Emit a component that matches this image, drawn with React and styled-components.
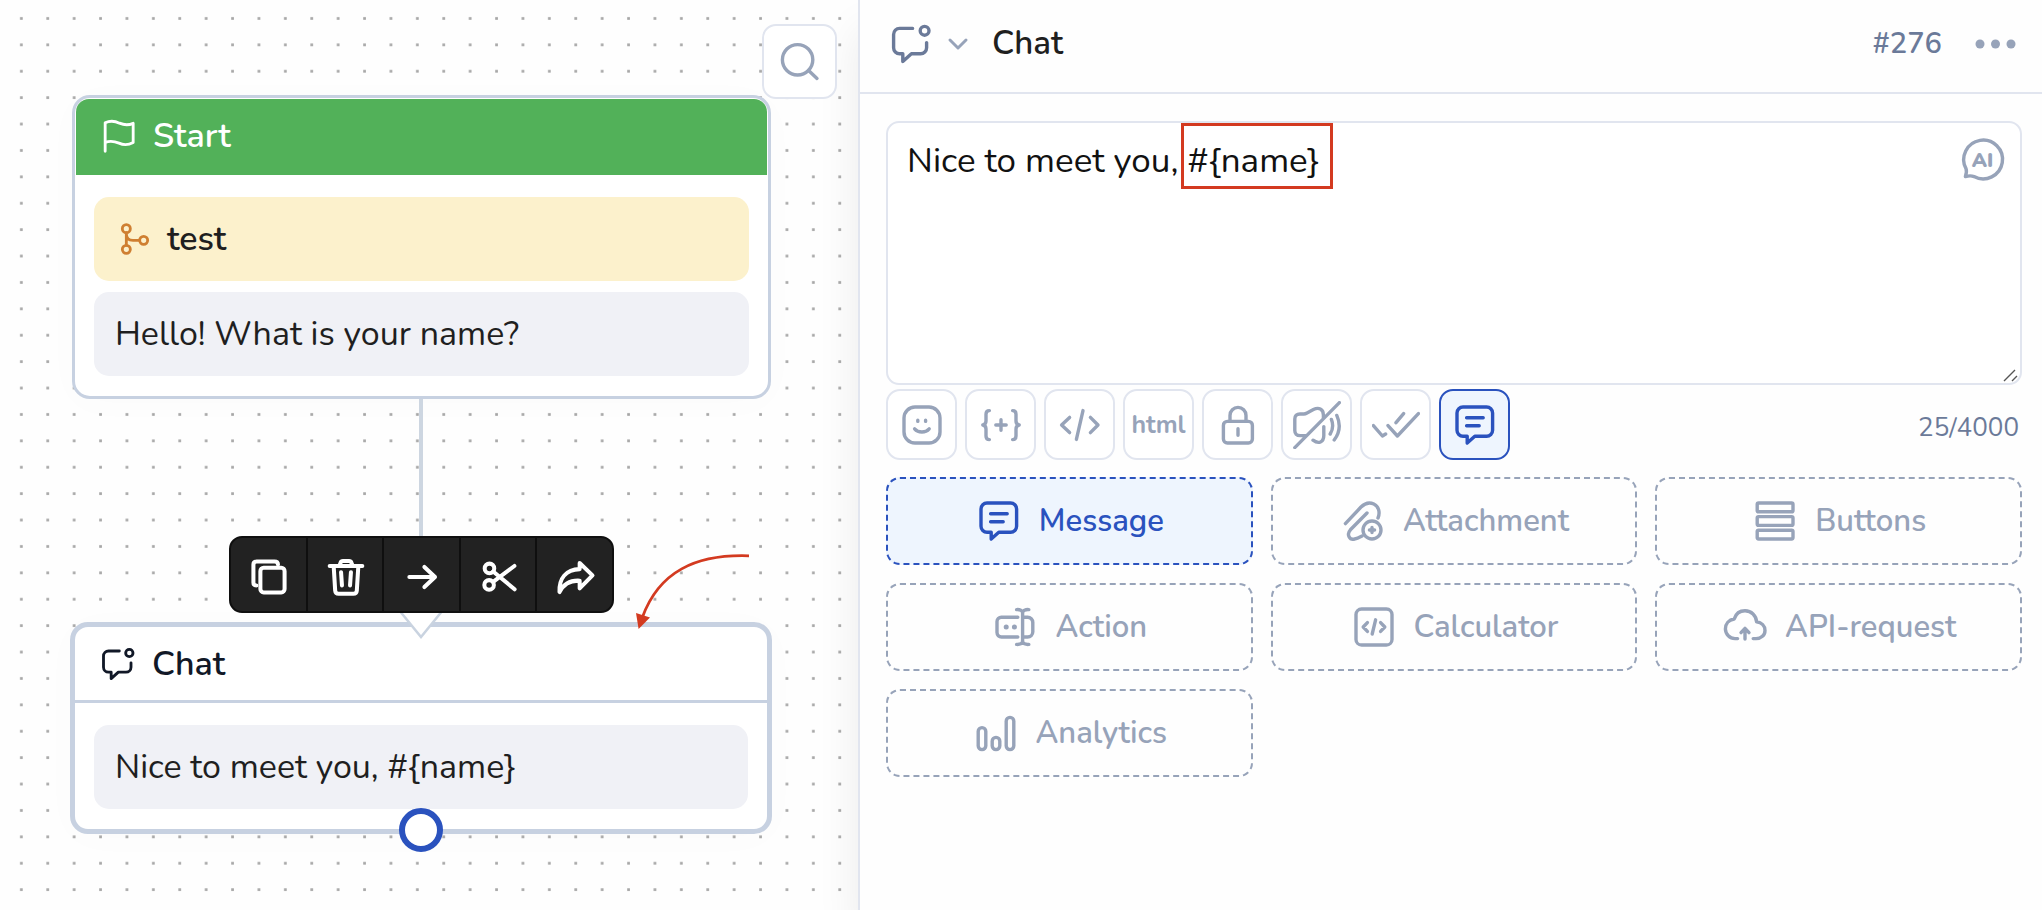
import React from "react";
import styled, { createGlobalStyle, css } from "styled-components";

const color = {
  ink: "#1f1f1f",
  navy: "#111827",
  blue: "#2a52be",
  blueSoft: "#eef5fe",
  slate: "#6b7a99",
  muted: "#97a3b9",
  line: "#e1e5ef",
  node: "#c7d1e1",
  red: "#d33a20",
};

const GlobalStyle = createGlobalStyle`
  *, *::before, *::after { box-sizing: border-box; }
  body { margin: 0; background: #fefefe; }
  body, button, textarea { font-family: Nunito, Lato, sans-serif; }
  h2, h3, p { margin: 0; }
  svg { display: block; flex: none; }
`;

const Page = styled.div`
  display: grid;
  grid-template-columns: 429fr 592fr;
  min-height: 100vh;
`;

/* ---------- icons ---------- */

const Svg = styled.svg`
  width: ${(p) => p.$size}px;
  height: ${(p) => p.$size}px;
  fill: none;
  stroke: currentColor;
  stroke-width: ${(p) => p.$stroke};
  stroke-linecap: round;
  stroke-linejoin: round;
`;

const Icon = ({ size = 48, stroke = 1.7, children }) => (
  <Svg viewBox="0 0 24 24" $size={size} $stroke={stroke} aria-hidden="true">
    {children}
  </Svg>
);

const art = {
  chat: (
    <>
      <path d="M12.800 4.200H6.300a3 3 0 0 0-3 3v6.700a3 3 0 0 0 3 3h1.600v3.900l4.300-3.900h4.600a3 3 0 0 0 3-3v-2.600" />
      <circle cx="18.800" cy="5.400" r="2.200" />
    </>
  ),
  message: (
    <path d="M6 3h11.800a3 3 0 0 1 3 3v8.600a3 3 0 0 1-3 3h-5.900L8.100 21v-3.400H6a3 3 0 0 1-3-3V6a3 3 0 0 1 3-3zM7.800 8.400h8.300M7.800 12.400h6.300" />
  ),
  smile: (
    <>
      <rect x="3" y="3" width="18" height="18" rx="5.500" />
      <path d="M9.900 9.600v.6M13.800 9.600v.6M8.300 13.900c1.800 2.100 5.500 2.100 7.300 0" />
    </>
  ),
  variable: (
    <path d="M6.200 4.800c-1.200 0-1.700.7-1.700 1.800v3.400c0 1.100-.5 1.800-1.600 2 1.100.2 1.600.9 1.600 2v3.500c0 1.100.5 1.800 1.700 1.800M17.800 4.800c1.200 0 1.700.7 1.700 1.800v3.400c0 1.100.5 1.800 1.600 2-1.100.2-1.600.9-1.600 2v3.500c0 1.100-.5 1.800-1.700 1.800M12 9.400v5.200M9.400 12h5.200" />
  ),
  code: <path d="M6.800 8.200l-4 3.800 4 3.800M17.200 8.200l3.800 3.800-3.800 3.800M13.500 4.800l-3.300 14.400" />,
  lock: (
    <>
      <rect x="4.700" y="10.200" width="14.500" height="10.800" rx="2" />
      <path d="M8 10.200V7.200a4 4 0 0 1 8 0v3M12 13.900v3.200" />
    </>
  ),
  mute: (
    <path d="M6.200 17.300H3.600c-1.800 0-2.700-1-2.700-2.600V9c0-1.600.9-2.500 2.600-2.500h1.900c.6 0 1.100-.2 1.600-.5l3.200-1.700c2.600-1.300 5-.4 5 2.700v1.600M15.400 12.800v4.500c0 3.300-2.600 4.400-5.400 2.300M.9 23.300L23.200.8M19.200 9.200c.9 2.300.8 5-.6 7.300M21.900 7.200c1.800 4 1.500 8.600-1.300 12.300" />
  ),
  checks: <path d="M.7 12.300l4.500 5.200 1.600-1M8 12.300l4.700 5.200L23.200 6.300M12 10.800l3.800-4.500" />,
  attachment: (
    <>
      <path d="M3.200 13.300L11 5c2.100-2.100 4.300-2.500 6.400-1.500 2.400 1.200 3.300 4.100 2.100 7M14 8l-8.300 8.400c-2.100 2.300-.4 5.300 2.100 4.600 1.400-.2 2.600-.9 3.700-1.500" />
      <circle cx="16.500" cy="16.500" r="4.500" />
      <path d="M16.500 15.200v2.600M15.200 16.500h2.600" />
    </>
  ),
  buttons: (
    <>
      <rect x="3.100" y="3" width="17.900" height="4.400" rx=".7" />
      <rect x="3.100" y="9.800" width="17.900" height="4.400" rx=".7" />
      <rect x="3.100" y="16.600" width="17.900" height="4.400" rx=".7" />
    </>
  ),
  action: (
    <>
      <path d="M13.400 7.100H5.200A2.200 2.200 0 0 0 3 9.300v5.500A2.200 2.200 0 0 0 5.200 17h8.200M16.600 7.100h1.700a2.600 2.600 0 0 1 2.600 2.600v4.700a2.600 2.600 0 0 1-2.600 2.600h-1.700M15.800 5v14M12.800 3.300c1.600-.1 3 .3 3 1.700 0-1.400 1.500-1.800 3.100-1.700M12.800 20.700c1.600.1 3-.3 3-1.700 0 1.400 1.500 1.800 3.100 1.700" />
      <path d="M7.600 12h.01M11.700 12h.01" strokeWidth="2.500" />
    </>
  ),
  calculator: (
    <>
      <rect x="3" y="3" width="18" height="18" rx="2.800" />
      <path d="M8.700 9.800L6.600 12l2.100 2.200M15.300 9.800l2.100 2.200-2.100 2.200M12.800 8.400l-1.700 7.100" />
    </>
  ),
  cloud: (
    <path d="M8.300 17.800H7A4.900 4.900 0 0 1 2.200 13c0-2.700 1.700-4.600 4.400-5C7.400 5.500 9.500 3.900 12 3.900c3.200 0 5.600 2.300 5.800 5.500 2.500.4 4.200 2.100 4.200 4.300 0 2.400-1.900 4.100-4.500 4.100H16.100M12 18v-5.200M10 14.800l2-2.100 2 2.100" />
  ),
  analytics: (
    <>
      <rect x="3.100" y="9.300" width="3.800" height="11" rx="1.900" />
      <rect x="10.100" y="14.200" width="3.800" height="6.100" rx="1.900" />
      <rect x="17.100" y="4.200" width="3.800" height="16.100" rx="1.900" />
    </>
  ),
  flag: (
    <path d="M3.700 21.200V4.100c3.100-1.500 5.700-1.200 8.600.2 2.800 1.200 5.200 1.400 8.200.1v11.500c-3 1.600-5.700 1.600-8.500.4-2.900-1.200-5.500-1.500-8.300-.4" />
  ),
  branch: (
    <>
      <circle cx="6.800" cy="5.800" r="2.400" />
      <circle cx="6.800" cy="18.200" r="2.400" />
      <circle cx="17.200" cy="12.800" r="2.400" />
      <path d="M6.800 8.200v7.600M6.800 8.800c0 2.800 1.500 4 4 4h4" />
    </>
  ),
  copy: (
    <>
      <rect x="7.300" y="7" width="13.200" height="13.400" rx="1.800" />
      <path d="M5.100 16.600c-1 0-1.600-.6-1.600-1.600V5.300c0-1.200.7-1.800 1.800-1.800H15c1.200 0 1.900.6 1.900 1.700" />
    </>
  ),
  trash: (
    <path d="M3.100 6h17.800M8.500 5.600l.6-1.500c.2-.6.6-.8 1.200-.8h3.400c.6 0 1 .2 1.200.8l.6 1.500M5.300 6.500l.8 12.900c.1 1.200.8 1.700 1.900 1.700h8c1.100 0 1.800-.5 1.900-1.700l.8-12.900M9.300 9.400l.5 7.200M14.700 9.400l-.5 7.200" />
  ),
  arrow: <path d="M5.100 12h14M13.300 6.500l5.800 5.500-5.800 5.500" />,
  scissors: (
    <>
      <circle cx="6.800" cy="7.300" r="2.600" />
      <circle cx="6.600" cy="16.300" r="2.600" />
      <path d="M8.800 9l11.700 9.700M8.800 14.700L20.400 6" />
    </>
  ),
  share: (
    <path d="M3 20.200c-.3-7.600 3.600-12.200 11-12.500V4.400l7 6.700-7 7.100V14c-5.200-.3-8.700 1.600-11 6.200z" />
  ),
};

/* ---------- flow canvas ---------- */

const Canvas = styled.main`
  position: relative;
  overflow: hidden;
  color: ${color.ink};
`;

const Grid = styled.svg`
  position: absolute;
  inset: 0;
  width: 100%;
  height: 100%;
`;

const SearchButton = styled.button`
  position: absolute;
  top: 24px;
  right: 21px;
  z-index: 3;
  display: grid;
  place-items: center;
  width: 75px;
  height: 75px;
  padding: 0;
  border: 2px solid ${color.line};
  border-radius: 14px;
  background: #fff;
  color: ${color.muted};
`;

const Node = styled.section`
  position: absolute;
  left: ${(p) => p.$x}px;
  top: ${(p) => p.$y}px;
  width: ${(p) => p.$w}px;
  border: ${(p) => (p.$selected ? 5 : 3)}px solid ${color.node};
  border-radius: 18px;
  background: #fff;
  box-shadow: 0 4px 40px rgba(0, 0, 0, 0.015);
`;

const NodeHeader = styled.header`
  display: flex;
  align-items: center;
  gap: 14px;
  height: 76px;
  ${(p) =>
    p.$filled
      ? css`
          margin: 1px 1px 0;
          padding: 0 23px 2px;
          border-radius: 13px 13px 0 0;
          background: #52b159;
          color: #fff;
        `
      : css`
          padding: 0 23px;
          border-bottom: 3px solid ${color.node};
          color: ${color.navy};
        `}
`;

const NodeTitle = styled.h3`
  font-size: 34px;
  line-height: 44px;
  font-weight: 600;
`;

const NodeBody = styled.div`
  display: flex;
  flex-direction: column;
  gap: 11px;
  padding: 22px 19px 20px;
`;

const Bubble = styled.div`
  display: flex;
  align-items: center;
  gap: 12px;
  height: 84px;
  padding: 0 21px;
  border-radius: 15px;
  background: ${(p) => (p.$accent ? "#fcf1cc" : "#f0f1f6")};
  font-size: 34px;
  line-height: 44px;
  font-weight: ${(p) => (p.$accent ? 600 : 400)};
`;

const BubbleIcon = styled.span`
  color: #cf7f31;
`;

const Links = styled.svg`
  position: absolute;
  left: 0;
  top: 0;
  width: 858px;
  height: 910px;
  fill: none;
  pointer-events: none;
`;

const Actions = styled.div`
  position: absolute;
  left: 229px;
  top: 536px;
  z-index: 2;
  display: flex;
  width: 385px;
  height: 77px;
  border: 2px solid #0f0f0f;
  border-radius: 13px;
  background: #222;
  overflow: hidden;
`;

const ActionButton = styled.button`
  flex: 1;
  display: grid;
  place-items: center;
  padding: 4px 0 0 2px;
  border: 0;
  background: none;
  color: #fff;

  & + & {
    border-left: 2px solid #0f0f0f;
  }
`;

/* ---------- editor panel ---------- */

const Panel = styled.aside`
  position: relative;
  border-left: 2px solid ${color.line};
  background: #fefefe;
  box-shadow: 0 30px 40px rgba(0, 0, 0, 0.08);
`;

const PanelHeader = styled.header`
  display: flex;
  align-items: center;
  height: 94px;
  padding: 0 18px 4px 27px;
  border-bottom: 2px solid ${color.line};
`;

const TypeButton = styled.button`
  display: flex;
  align-items: center;
  gap: 9px;
  padding: 0;
  border: 0;
  background: none;
  color: ${color.slate};
`;

const Chevron = styled.svg`
  width: 28px;
  height: 28px;
  fill: none;
  stroke: ${color.muted};
  stroke-width: 3;
  stroke-linecap: round;
  stroke-linejoin: round;
`;

const PanelTitle = styled.h2`
  flex: 1;
  margin-left: 20px;
  color: ${color.ink};
  font-size: 33px;
  line-height: 44px;
  font-weight: 600;
`;

const BlockId = styled.span`
  color: ${color.slate};
  font-size: 29px;
  line-height: 44px;
  font-weight: 600;
`;

const MoreButton = styled.button`
  margin-left: 26px;
  padding: 0;
  border: 0;
  background: none;
  color: ${color.muted};
`;

const PanelBody = styled.div`
  display: flex;
  flex-direction: column;
  padding: 27px 20px 26px 26px;
`;

const Field = styled.div`
  position: relative;
  height: 264px;
`;

const TextBox = styled.textarea`
  display: block;
  width: 100%;
  height: 100%;
  padding: 16px 80px 16px 19px;
  border: 2px solid ${color.line};
  border-radius: 13px;
  background: #fff;
  color: #111;
  font-size: 35px;
  line-height: 44px;
  resize: none;
  outline: none;
`;

const Highlight = styled.span`
  position: absolute;
  left: 295px;
  top: 2px;
  width: 152px;
  height: 66px;
  border: 3px solid ${color.red};
  pointer-events: none;
`;

const AiButton = styled.button`
  position: absolute;
  top: 15px;
  right: 16px;
  padding: 0;
  border: 0;
  background: none;
  color: ${color.muted};
`;

const Grip = styled.svg`
  position: absolute;
  right: 3px;
  bottom: 3px;
  width: 16px;
  height: 13px;
  stroke: #555;
  stroke-width: 1.4;
`;

const Tools = styled.div`
  display: flex;
  align-items: center;
  gap: 8px;
  margin: 4px 0 17px;
`;

const ToolButton = styled.button`
  display: grid;
  place-items: center;
  width: 71px;
  height: 71px;
  padding: 0;
  border: 2px solid ${(p) => (p.$active ? color.blue : color.line)};
  border-radius: 14px;
  background: ${(p) => (p.$active ? color.blueSoft : "#fff")};
  color: ${(p) => (p.$active ? color.blue : color.muted)};
  font-size: 25px;
  font-weight: 700;
`;

const Counter = styled.output`
  margin-left: auto;
  padding: 6px 3px 0 0;
  color: ${color.slate};
  font-size: 26px;
  line-height: 36px;
`;

const Tiles = styled.div`
  display: grid;
  grid-template-columns: repeat(3, 1fr);
  gap: 18px;
`;

const Tile = styled.button`
  display: flex;
  align-items: center;
  justify-content: center;
  gap: 16px;
  height: 88px;
  padding: 0 12px;
  border: 2px dashed ${(p) => (p.$active ? color.blue : color.muted)};
  border-radius: 14px;
  background: ${(p) => (p.$active ? color.blueSoft : "transparent")};
  color: ${(p) => (p.$active ? color.blue : color.muted)};
  font-size: 31px;
  line-height: 40px;
  font-weight: 600;
`;

const nodeActions = [
  ["copy", "Copy"],
  ["trash", "Delete"],
  ["arrow", "Move to"],
  ["scissors", "Cut"],
  ["share", "Share"],
];

const tools = [
  ["smile", "Emoji"],
  ["variable", "Insert variable"],
  ["code", "Code"],
  ["html", "HTML"],
  ["lock", "Protect"],
  ["mute", "Silent"],
  ["checks", "Mark as read"],
  ["message", "Message"],
];

const tiles = [
  ["message", "Message"],
  ["attachment", "Attachment"],
  ["buttons", "Buttons"],
  ["action", "Action"],
  ["calculator", "Calculator"],
  ["cloud", "API-request"],
  ["analytics", "Analytics"],
];

function FlowCanvas() {
  return (
    <Canvas>
      <Grid aria-hidden="true">
        <defs>
          <pattern id="dots" x="8.100" y="5.200" width="26.400" height="26.400" patternUnits="userSpaceOnUse">
            <rect x="11.900" y="11.900" width="2.700" height="2.700" fill="#a6a6a6" />
          </pattern>
        </defs>
        <rect width="100%" height="100%" fill="url(#dots)" />
      </Grid>

      <Node $x={72} $y={95} $w={699}>
        <NodeHeader $filled>
          <Icon size={40}>{art.flag}</Icon>
          <NodeTitle>Start</NodeTitle>
        </NodeHeader>
        <NodeBody>
          <Bubble $accent>
            <BubbleIcon>
              <Icon size={40}>{art.branch}</Icon>
            </BubbleIcon>
            test
          </Bubble>
          <Bubble>Hello! What is your name?</Bubble>
        </NodeBody>
      </Node>

      <Node $x={70} $y={622} $w={702} $selected>
        <NodeHeader>
          <Icon size={40}>{art.chat}</Icon>
          <NodeTitle>Chat</NodeTitle>
        </NodeHeader>
        <NodeBody>
          <Bubble>Nice to meet you, #&#123;name&#125;</Bubble>
        </NodeBody>
      </Node>

      <Links viewBox="0 0 858 910" aria-hidden="true">
        <path d="M421 399V540" stroke="#cdd6e1" strokeWidth="4" />
        <path d="M399 610L421 637L443 610" fill="#fff" stroke="#c9d3e0" strokeWidth="2.500" />
        <circle cx="421" cy="830" r="19" fill="#fff" stroke={color.blue} strokeWidth="6" />
        <path d="M749 555.800C695 554 659 572 642.500 617" stroke={color.red} strokeWidth="2.800" />
        <path d="M636 613l14 4.500-11.400 11.500z" fill={color.red} />
      </Links>

      <Actions role="toolbar" aria-label="Block actions">
        {nodeActions.map(([icon, label]) => (
          <ActionButton key={icon} type="button" aria-label={label}>
            <Icon size={44} stroke={2.2}>
              {art[icon]}
            </Icon>
          </ActionButton>
        ))}
      </Actions>

      <SearchButton type="button" aria-label="Search">
        <Icon size={48}>
          <circle cx="10.800" cy="10.900" r="7.600" />
          <path d="M16.300 16.200l4.200 4" />
        </Icon>
      </SearchButton>
    </Canvas>
  );
}

function Editor() {
  return (
    <Panel>
      <PanelHeader>
        <TypeButton type="button" aria-label="Block type">
          <Icon>{art.chat}</Icon>
          <Chevron viewBox="0 0 28 28" aria-hidden="true">
            <path d="M6 10l8 8 8-8" />
          </Chevron>
        </TypeButton>
        <PanelTitle>Chat</PanelTitle>
        <BlockId>#276</BlockId>
        <MoreButton type="button" aria-label="More">
          <svg width="56" height="20" viewBox="0 0 56 20" fill="currentColor" aria-hidden="true">
            <circle cx="12" cy="10" r="4.500" />
            <circle cx="27.500" cy="10" r="4.500" />
            <circle cx="43" cy="10" r="4.500" />
          </svg>
        </MoreButton>
      </PanelHeader>

      <PanelBody>
        <Field>
          <TextBox aria-label="Message text" spellCheck={false} defaultValue={"Nice to meet you, #{name}"} />
          <Highlight />
          <AiButton type="button" aria-label="AI assistant">
            <Icon>
              <path d="M4 16.300a9.700 9.700 0 1 1 4 4c-1.400-.6-2.600-.5-4.300 0 .5-1.500.8-2.700.3-4z" />
              <text x="12.200" y="15.400" textAnchor="middle" fill="currentColor" stroke="none" fontSize="10" fontWeight="900">
                AI
              </text>
            </Icon>
          </AiButton>
          <Grip viewBox="0 0 16 13" aria-hidden="true">
            <path d="M1 12L12 1M9 12l5-5" />
          </Grip>
        </Field>

        <Tools>
          {tools.map(([icon, label]) => (
            <ToolButton key={icon} type="button" aria-label={label} $active={icon === "message"}>
              {icon === "html" ? "html" : <Icon>{art[icon]}</Icon>}
            </ToolButton>
          ))}
          <Counter>25/4000</Counter>
        </Tools>

        <Tiles>
          {tiles.map(([icon, label]) => (
            <Tile key={icon} type="button" $active={icon === "message"}>
              <Icon>{art[icon]}</Icon>
              {label}
            </Tile>
          ))}
        </Tiles>
      </PanelBody>
    </Panel>
  );
}

export default function App() {
  return (
    <>
      <GlobalStyle />
      <Page>
        <FlowCanvas />
        <Editor />
      </Page>
    </>
  );
}
